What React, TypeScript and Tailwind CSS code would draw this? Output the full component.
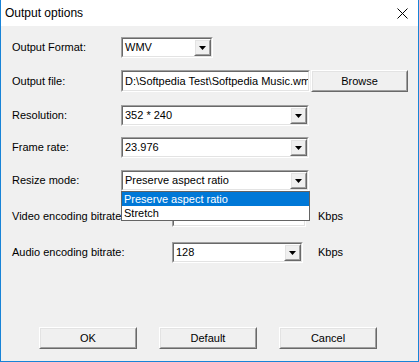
import React from "react";

const font = { fontFamily: '"Liberation Sans", Arial, sans-serif' };

function Sunken({ className, children }: { className: string; children?: React.ReactNode }) {
    return (
        <div className={`${className} border border-t-[#a0a0a0] border-l-[#a0a0a0] border-b-white border-r-white`}>
            <div className="h-full w-full border border-t-[#696969] border-l-[#696969] border-b-[#e3e3e3] border-r-[#e3e3e3] bg-white flex items-center overflow-hidden">
                {children}
            </div>
        </div>
    );
}

function Raised({ className, children }: { className: string; children?: React.ReactNode }) {
    return (
        <div className={`${className} border border-t-white border-l-white border-b-[#696969] border-r-[#696969] bg-[#f0f0f0]`}>
            <div className="h-full w-full border border-t-[#e3e3e3] border-l-[#e3e3e3] border-b-[#a0a0a0] border-r-[#a0a0a0] flex items-center justify-center">
                {children}
            </div>
        </div>
    );
}

function Combo({ value, className }: { value: string; className: string }) {
    return (
        <Sunken className={`${className} h-[21px]`}>
            <span className="flex-1 pl-[2px] whitespace-nowrap overflow-hidden">{value}</span>
            <Raised className="w-[17px] h-[17px] shrink-0">
                <svg width="7" height="4" viewBox="0 0 7 4">
                    <path d="M0 0h7L3.5 4z" fill="#000" />
                </svg>
            </Raised>
        </Sunken>
    );
}

function Row({ label, labelW, children, className }: { label: string; labelW: string; children: React.ReactNode; className: string }) {
    return (
        <div className={`flex items-center ${className}`}>
            <div className={`${labelW} shrink-0`}>{label}</div>
            {children}
        </div>
    );
}

export default function App() {
    return (
        <div
            style={font}
            className="w-[419px] h-[362px] bg-[#f0f0f0] border-x border-b border-[#1883d7] flex flex-col text-[11px] text-black leading-none"
        >
            {/* Title bar */}
            <div className="h-[26px] bg-white flex items-center pl-[4px] pr-[10px] shrink-0">
                <span className="text-[12px] flex-1">Output options</span>
                <svg width="11" height="11" viewBox="0 0 11 11">
                    <path d="M0.5 0.5l10 10M10.5 0.5l-10 10" stroke="#000" strokeWidth="1" />
                </svg>
            </div>

            <div className="flex flex-col pl-[11px] flex-1 relative">
                <Row label="Output Format:" labelW="w-[109px]" className="mt-[11px]">
                    <Combo value="WMV" className="w-[92px]" />
                </Row>

                <Row label="Output file:" labelW="w-[109px]" className="mt-[12px]">
                    <Sunken className="w-[189px] h-[22px]">
                        <span className="pl-[2px] whitespace-nowrap">D:\Softpedia Test\Softpedia Music.wmv</span>
                    </Sunken>
                    <Raised className="w-[97px] h-[22px] ml-[1px]">Browse</Raised>
                </Row>

                <Row label="Resolution:" labelW="w-[109px]" className="mt-[13px]">
                    <Combo value="352 * 240" className="w-[188px]" />
                </Row>

                <Row label="Frame rate:" labelW="w-[109px]" className="mt-[11px]">
                    <Combo value="23.976" className="w-[188px]" />
                </Row>

                <Row label="Resize mode:" labelW="w-[109px]" className="mt-[12px] relative z-10">
                    <div className="relative">
                        <Combo value="Preserve aspect ratio" className="w-[188px]" />
                        <div className="absolute left-0 top-[21px] w-[189px] border border-[#646464] bg-white">
                            <div className="h-[14px] bg-[#0078d7] text-white pl-[2px] flex items-center">Preserve aspect ratio</div>
                            <div className="h-[14px] pl-[2px] flex items-center">Stretch</div>
                        </div>
                    </div>
                </Row>

                <Row label="Video encoding bitrate:" labelW="w-[160px]" className="mt-[15px]">
                    <Sunken className="w-[134px] h-[21px]" />
                    <span className="ml-[12px]">Kbps</span>
                </Row>

                <Row label="Audio encoding bitrate:" labelW="w-[160px]" className="mt-[15px]">
                    <Combo value="128" className="w-[131px]" />
                    <span className="ml-[15px]">Kbps</span>
                </Row>

                <div className="mt-auto mb-[12px] flex gap-[22px] pl-[27px]">
                    <Raised className="w-[98px] h-[22px]">OK</Raised>
                    <Raised className="w-[98px] h-[22px]">Default</Raised>
                    <Raised className="w-[98px] h-[22px]">Cancel</Raised>
                </div>
            </div>
        </div>
    );
}
